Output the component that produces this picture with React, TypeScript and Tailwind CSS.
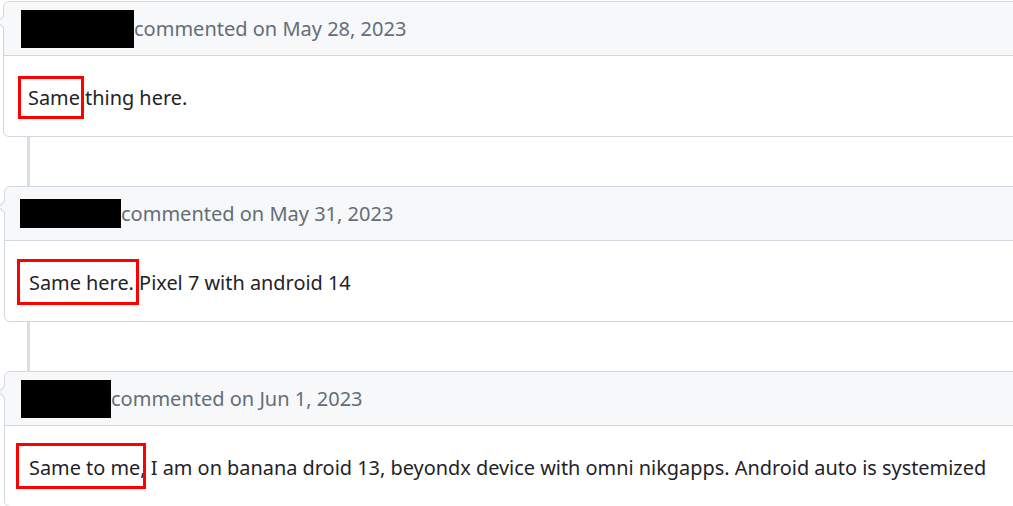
import React from "react";

// Three stacked comment cards on a timeline; usernames redacted, first words boxed in red.

type Comment = {
  nameWidth: number;
  nameHeight: number;
  pad: number;
  date: string;
  body: string;
  box: { left: number; top: number; width: number; height: number };
  indent: number;
};

const comments: Comment[] = [
  {
    nameWidth: 113,
    nameHeight: 38,
    pad: 17,
    date: "May 28, 2023",
    body: "Same thing here.",
    box: { left: 14, top: 20, width: 66, height: 43 },
    indent: 3,
  },
  {
    nameWidth: 101,
    nameHeight: 29,
    pad: 15,
    date: "May 31, 2023",
    body: "Same here. Pixel 7 with android 14",
    box: { left: 12, top: 18, width: 122, height: 46 },
    indent: 4,
  },
  {
    nameWidth: 90,
    nameHeight: 38,
    pad: 16,
    date: "Jun 1, 2023",
    body: "Same to me, I am on banana droid 13, beyondx device with omni nikgapps. Android auto is systemized",
    box: { left: 11, top: 17, width: 130, height: 46 },
    indent: 4,
  },
];

function CommentCard({ c }: { c: Comment }) {
  return (
    <div
      className="relative w-[1030px] rounded-md border border-[#d0d7de] bg-white"
      style={{ marginLeft: c.indent }}
    >
      <div className="absolute left-[-5px] top-[15px] h-[10px] w-[10px] rotate-45 border-b border-l border-[#d0d7de] bg-[#f6f8fa]" />
      <div
        className="relative flex h-[54px] items-center rounded-t-md border-b border-[#d0d7de] bg-[#f6f8fa]"
        style={{ paddingLeft: c.pad }}
      >
        <div className="bg-black" style={{ width: c.nameWidth, height: c.nameHeight }} />
        <span className="text-[20px] text-[#656d76]">commented on {c.date}</span>
      </div>
      <div className="relative flex h-[80px] items-center pl-6 pt-1">
        <p className="text-[19.9px] text-[#1f2328]">{c.body}</p>
        <div
          className="absolute border-[3px] border-[#ff0000]"
          style={{ left: c.box.left, top: c.box.top, width: c.box.width, height: c.box.height }}
        />
      </div>
    </div>
  );
}

function Gap() {
  return <div className="ml-[27px] h-[49px] w-[3px] bg-[#d8dee4]" />;
}

export default function App() {
  return (
    <div
      className="h-[506px] w-[1013px] overflow-hidden bg-white pt-px"
      style={{ fontFamily: '"Noto Sans", "Open Sans", sans-serif' }}
    >
      <CommentCard c={comments[0]} />
      <Gap />
      <CommentCard c={comments[1]} />
      <Gap />
      <CommentCard c={comments[2]} />
    </div>
  );
}
